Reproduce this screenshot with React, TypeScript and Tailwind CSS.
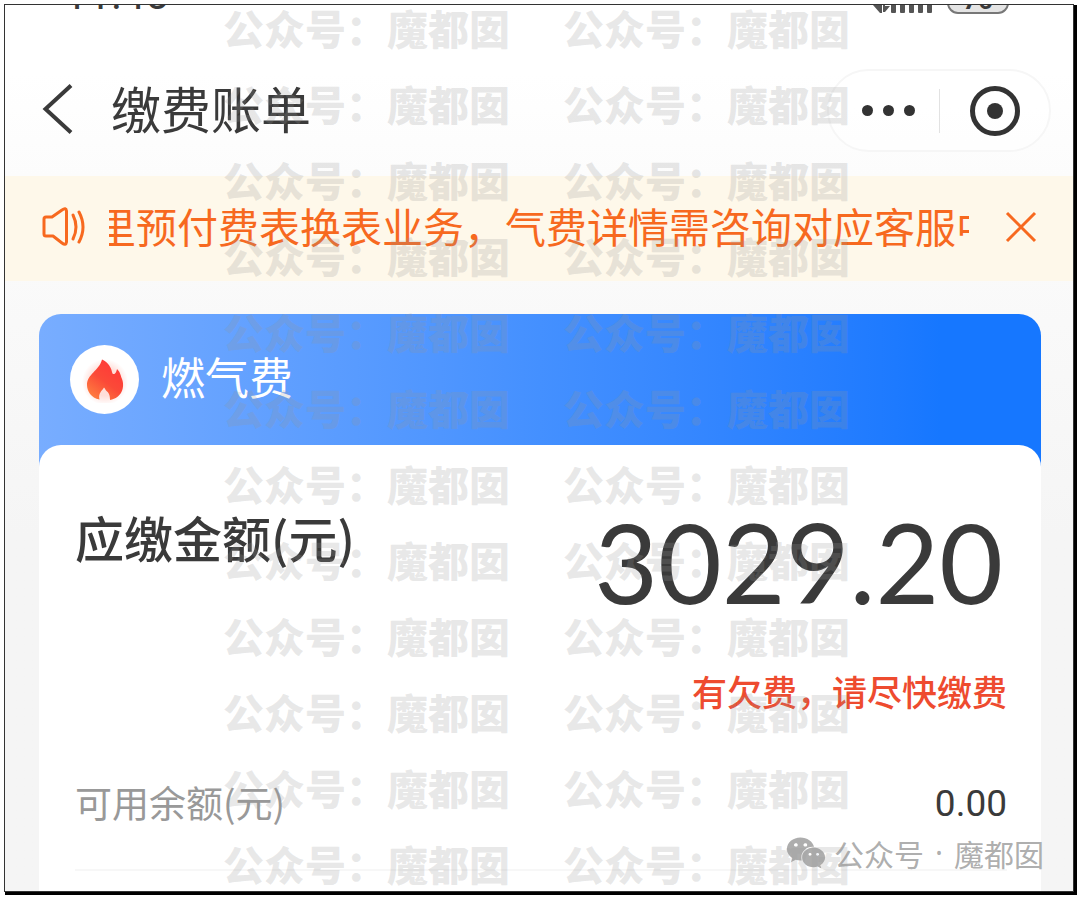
import React from 'react';
import { FaWeixin } from 'react-icons/fa';

const WATERMARK_ROWS = Array.from({ length: 12 }, (_, i) => i);

function StatusBar() {
  return (
    <div className="flex h-[9px] items-end justify-between overflow-hidden pl-[59px] pr-16">
      <span className="font-['Roboto',sans-serif] text-[42px] leading-[38px]">11:45</span>
      <div className="flex items-end gap-3">
        <svg className="h-6 w-[62px]" viewBox="0 0 62 24" fill="#555" aria-hidden="true">
          <path d="M0 15H6V10H9V23H7ZM10 10H12V16H17L12 22H10Z" />
          <rect x="18" y="12" width="5" height="11" rx="1" />
          <rect x="27" y="9" width="5" height="14" rx="1" />
          <rect x="36" y="6" width="5" height="17" rx="1" />
          <rect x="45" y="3" width="5" height="20" rx="1" />
          <rect x="54" y="0" width="5" height="23" rx="1" />
        </svg>
        <span className="flex h-8 w-[62px] items-end justify-center rounded-[11px] border-2 border-[#777] bg-[#e4e4e4] font-['Roboto',sans-serif] text-[26px] leading-[24px] font-bold">
          76
        </span>
      </div>
    </div>
  );
}

function NavBar() {
  return (
    <header className="flex items-center justify-between pt-[55px] pr-[22px] pb-6 pl-9">
      <div className="flex items-center pb-1">
        <button type="button" aria-label="返回" className="flex">
          <svg className="h-[50px] w-8" viewBox="0 0 32 50" fill="none" stroke="#3a3a3a" strokeWidth="4">
            <path d="M30 1.500L4.500 25L30 48.500" />
          </svg>
        </button>
        <h1 className="ml-[38px] pb-1 text-[50px] leading-[60px] font-normal">缴费账单</h1>
      </div>
      <div className="flex h-[83px] w-[224px] items-center rounded-full border-2 border-[#f6f6f6] bg-white/60">
        <button type="button" aria-label="更多" className="flex w-[110px] items-center justify-center gap-[10px] pl-2">
          <span className="size-[11px] rounded-full bg-[#333]" />
          <span className="size-[11px] rounded-full bg-[#333]" />
          <span className="size-[11px] rounded-full bg-[#333]" />
        </button>
        <span className="h-11 w-px bg-[#e2e2e2]" />
        <button type="button" aria-label="关闭" className="flex flex-1 items-center justify-center">
          <span className="flex size-[50px] items-center justify-center rounded-full border-[5px] border-[#333]">
            <span className="size-4 rounded-full bg-[#333]" />
          </span>
        </button>
      </div>
    </header>
  );
}

function Notice() {
  return (
    <div className="flex h-[105px] items-center bg-[#fef8ea] pr-9 pb-1 pl-9 text-[#f7691f]">
      <svg className="h-10 w-[46px] shrink-0" viewBox="0 0 46 40" fill="none" stroke="currentColor" strokeWidth="3" strokeLinejoin="round" strokeLinecap="round" aria-hidden="true">
        <path d="M5 10H11L21 3Q25 0 25.500 4V35Q25 39 21 36L12 29H5Q3 29 3 27V12Q3 10 5 10Z" />
        <path d="M32 8Q38 20 32 32" />
        <path d="M38 5Q46 20 38 35" />
      </svg>
      <div className="ml-[22px] flex-1 overflow-hidden">
        <p className="-ml-3.5 pb-1 text-[41px] leading-[52px] whitespace-nowrap">
          里预付费表换表业务，气费详情需咨询对应客服中心
        </p>
      </div>
      <button type="button" aria-label="关闭通知" className="ml-9 flex">
        <svg className="h-8 w-8" viewBox="0 0 32 32" fill="none" stroke="currentColor" strokeWidth="3">
          <path d="M2 2L30 30M30 2L2 30" />
        </svg>
      </button>
    </div>
  );
}

function FlameIcon() {
  return (
    <span className="flex size-[69px] items-center justify-center rounded-full bg-white">
      <svg className="h-[46px] w-[46px]" viewBox="0 0 46 46" aria-hidden="true">
        <defs>
          <linearGradient id="flame" x1="0.8" y1="0.1" x2="0.2" y2="1">
            <stop offset="0" stopColor="#ff3838" />
            <stop offset="0.5" stopColor="#fb4a38" />
            <stop offset="1" stopColor="#ff8040" />
          </linearGradient>
          <radialGradient id="glow">
            <stop offset="0.6" stopColor="#ff5a40" stopOpacity="0.2" />
            <stop offset="1" stopColor="#ff5a40" stopOpacity="0" />
          </radialGradient>
        </defs>
        <circle cx="23" cy="25" r="23" fill="url(#glow)" />
        <path
          fill="url(#flame)"
          d="M20 2.500C24 4 29 9 30 15C30.500 17.500 32 17.500 33 16.500C34 15.500 34.500 14 35 12C39 16 38.500 19 40 22C43 30 40 41 28 43C28 38 27 36 24.500 34C23.500 33 23 31.500 22 30.500C20 34 16 36 17.500 42.500C9 41 5 34 5 28C5 17 17 14 20 2.500Z"
        />
      </svg>
    </span>
  );
}

function BillCard() {
  return (
    <section className="mt-[33px] mr-8 ml-[34px] flex flex-1 flex-col rounded-t-[22px] bg-linear-to-r from-[#78adff] via-[#4490ff] via-50% to-[#1677ff] to-90%">
      <div className="flex h-[131px] items-center gap-[22px] pl-[31px] text-white">
        <FlameIcon />
        <h2 className="mb-2 text-[44px] leading-[52px] font-normal">燃气费</h2>
      </div>
      <div className="flex-1 rounded-t-[22px] bg-white pt-14 pr-[34px] pl-9">
        <div className="flex items-start justify-between">
          <span className="pt-1.5 text-[49px] leading-[60px] font-medium">应缴金额(元)</span>
          <span className="pr-1 font-['Lato',sans-serif] text-[110px] leading-[120px]">3029.20</span>
        </div>
        <p className="mt-[46px] text-right text-[35px] leading-[48px] font-medium text-[#ee4b2f]">有欠费，请尽快缴费</p>
        <div className="mt-[61px] flex items-center justify-between border-b-2 border-[#f7f7f7] pb-[41px]">
          <span className="text-[37px] leading-[52px] text-[#999]">可用余额(元)</span>
          <span className="pt-1 font-['Roboto',sans-serif] text-[37px] leading-[48px]">0.00</span>
        </div>
      </div>
    </section>
  );
}

function Watermark() {
  return (
    <div aria-hidden="true" className="pointer-events-none absolute inset-0 overflow-hidden">
      <div className="-mt-4 flex flex-col pl-[218px] text-[41px] leading-[76px] font-black text-[#969696]/22">
        {WATERMARK_ROWS.map((row) => (
          <div key={row} className="flex gap-[53px] whitespace-nowrap">
            <span>公众号：魔都囡</span>
            <span>公众号：魔都囡</span>
          </div>
        ))}
      </div>
    </div>
  );
}

export default function App() {
  return (
    <div className="flex min-h-screen bg-white pt-1 pr-[6px] pb-[6px] pl-1 font-['Noto_Sans_CJK_SC',sans-serif] text-[#3a3a3a]">
      <main className="relative flex flex-1 flex-col overflow-hidden border border-[#333] bg-linear-to-b from-[#fafafa] from-30% to-[#f5f5f5] to-60% shadow-[2px_2px_0_1px_#000]">
        <div className="bg-linear-to-b from-white from-40% to-[#fcfcfc]">
          <StatusBar />
          <NavBar />
        </div>
        <Notice />
        <BillCard />
        <Watermark />
        <div className="absolute right-[29px] bottom-4 flex items-center gap-2 text-[#999]/80">
          <FaWeixin className="h-9 w-10" aria-hidden="true" />
          <span className="flex text-[30px] leading-[44px]">
            公众号
            <span className="px-[11px] font-['Noto_Sans',sans-serif]">·</span>
            魔都囡
          </span>
        </div>
      </main>
    </div>
  );
}
